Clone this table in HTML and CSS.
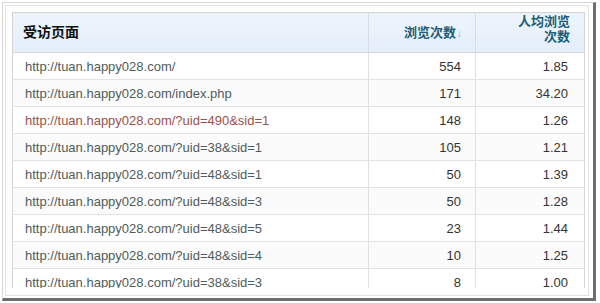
FILE: index.html
```html
<!DOCTYPE html>
<html>
<head>
<meta charset="utf-8">
<link rel="stylesheet" href="styles.css">
</head>
<body>
<div class="shot">
  <div class="frame">
    <div class="viewport">
      <table class="report">
        <colgroup>
          <col class="c-page">
          <col class="c-views">
          <col class="c-avg">
        </colgroup>
        <thead>
          <tr>
            <th class="page">受访页面</th>
            <th class="num sorted">浏览次数<span class="arrow">↓</span></th>
            <th class="num avg">人均浏览<br>次数</th>
          </tr>
        </thead>
        <tbody>
          <tr><td class="url">http://tuan.happy028.com/</td><td class="num">554</td><td class="num">1.85</td></tr>
          <tr class="alt"><td class="url">http://tuan.happy028.com/index.php</td><td class="num">171</td><td class="num">34.20</td></tr>
          <tr><td class="url visited">http://tuan.happy028.com/?uid=490&amp;sid=1</td><td class="num">148</td><td class="num">1.26</td></tr>
          <tr class="alt"><td class="url">http://tuan.happy028.com/?uid=38&amp;sid=1</td><td class="num">105</td><td class="num">1.21</td></tr>
          <tr><td class="url">http://tuan.happy028.com/?uid=48&amp;sid=1</td><td class="num">50</td><td class="num">1.39</td></tr>
          <tr class="alt"><td class="url">http://tuan.happy028.com/?uid=48&amp;sid=3</td><td class="num">50</td><td class="num">1.28</td></tr>
          <tr><td class="url">http://tuan.happy028.com/?uid=48&amp;sid=5</td><td class="num">23</td><td class="num">1.44</td></tr>
          <tr class="alt"><td class="url">http://tuan.happy028.com/?uid=48&amp;sid=4</td><td class="num">10</td><td class="num">1.25</td></tr>
          <tr><td class="url">http://tuan.happy028.com/?uid=38&amp;sid=3</td><td class="num">8</td><td class="num">1.00</td></tr>
        </tbody>
      </table>
    </div>
  </div>
</div>
</body>
</html>
```

FILE: styles.css
```css
html, body {
  margin: 0;
  padding: 0;
  background: #ffffff;
}

body {
  font-family: "Liberation Sans", Arial, "Noto Sans CJK SC", sans-serif;
  font-size: 13px;
  color: #333333;
}

.shot {
  margin: 2px 0 0 2px;
  width: 594px;
  height: 299px;
  box-sizing: border-box;
  border-left: 1px solid #d6d6d6;
  border-top: 1px solid #d6d6d6;
  border-right: 3px solid #6e6e6e;
  border-bottom: 3px solid #6e6e6e;
  padding: 2px 4px 0 2px;
  background: #ffffff;
}

.frame {
  border: 1px solid #e2e2e2;
  padding: 6px 0 7px 6px;
}

.viewport {
  height: 276px;
  overflow: hidden;
}

.report {
  border-collapse: collapse;
  width: 572px;
  table-layout: fixed;
  border: 1px solid #d4d4d4;
}

.c-page { width: 356px; }
.c-views { width: 107px; }
.c-avg { width: 109px; }

.report th {
  height: 39px;
  background: linear-gradient(#edf4fc, #e4eef9);
  border-bottom: 1px solid #d2d8de;
  border-left: 1px solid #d6dde4;
  font-size: 13px;
  font-weight: bold;
  line-height: 15px;
  vertical-align: middle;
  padding: 0;
}

.report th.page {
  text-align: left;
  padding-left: 10px;
  color: #111111;
  font-size: 14px;
  border-left: none;
}

.report th.num {
  text-align: right;
  color: #1d5d78;
}

.report th.sorted {
  padding-right: 13px;
}

.report th.avg {
  height: 38px;
  padding-top: 1px;
  padding-right: 14px;
  vertical-align: top;
}

.arrow {
  color: #9aa6ad;
  font-weight: normal;
  font-size: 10px;
  margin-left: 1px;
}

.report td {
  height: 26px;
  padding: 0;
  border-bottom: 1px solid #e3e3e3;
  border-left: 1px solid #e1e1e1;
  white-space: nowrap;
  vertical-align: middle;
}

.report td.url {
  border-left: none;
  padding-left: 12px;
  color: #4f5c5a;
}

.report td.visited {
  color: #9c4f4c;
}

.report td.num {
  text-align: right;
  padding-right: 14px;
  color: #333333;
}

.report td.num + td.num {
  padding-right: 16px;
}

.report tr.alt td {
  background: #fbfbfb;
}
```
